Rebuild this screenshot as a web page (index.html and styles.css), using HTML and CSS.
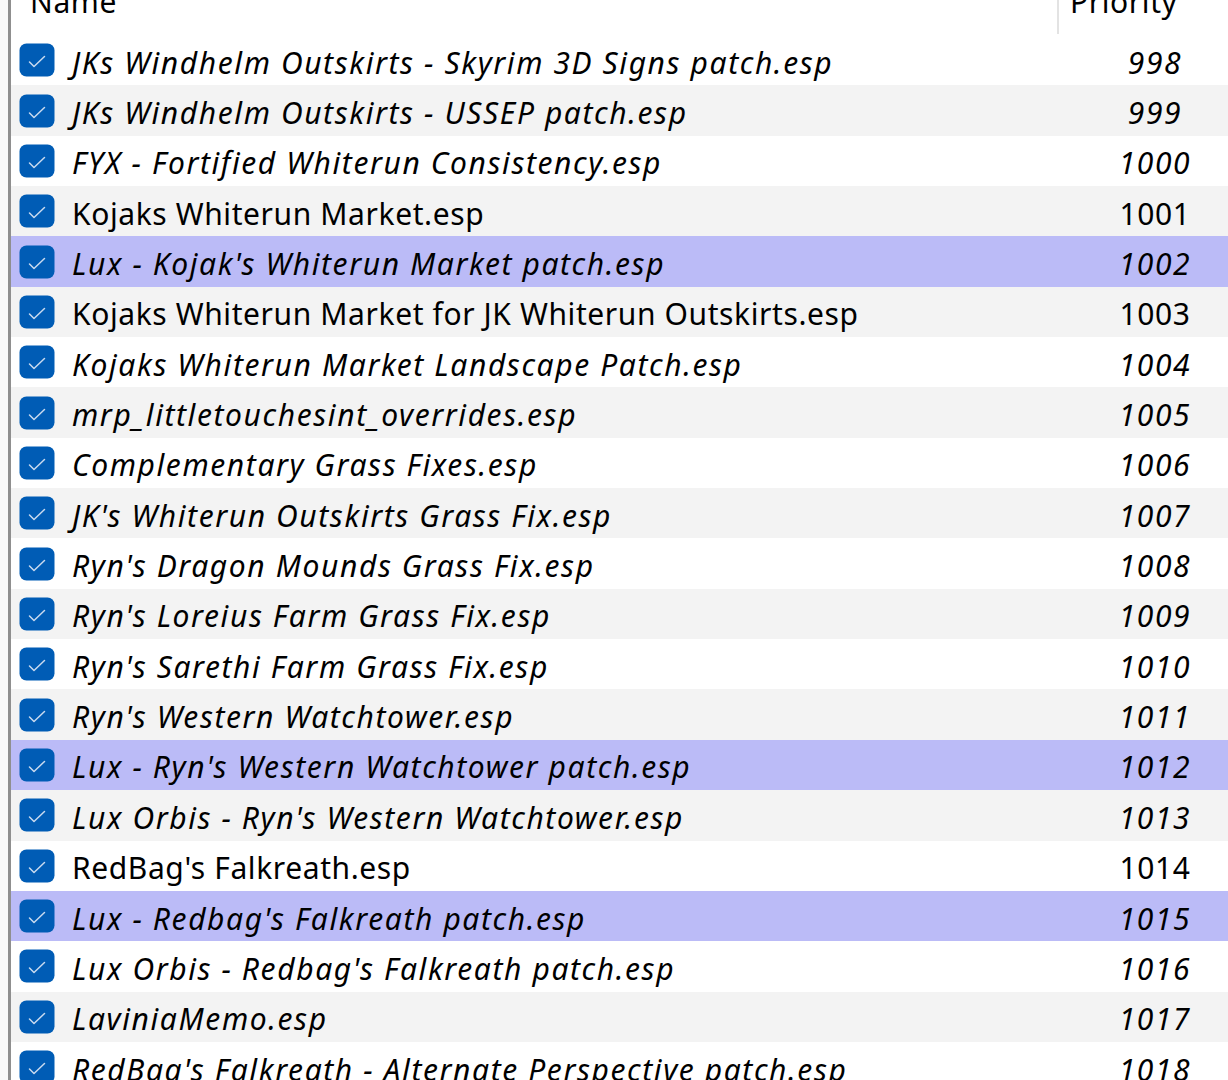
FILE: index.html
```html
<!DOCTYPE html>
<html lang="en">
<head>
    <meta charset="UTF-8">
    <title>Plugins</title>
    <link rel="stylesheet" href="styles.css">
</head>
<body>
    <div class="view">
        <div class="header">
            <div class="col-name">Name</div>
            <div class="col-prio">Priority</div>
        </div>
        <div class="rows" id="rows"></div>
    </div>

<script>
    // список плагинов: имя, приоритет, курсив, подсветка
    const plugins = [
        ["JKs Windhelm Outskirts - Skyrim 3D Signs patch.esp", 998, true, false],
        ["JKs Windhelm Outskirts - USSEP patch.esp", 999, true, false],
        ["FYX - Fortified Whiterun Consistency.esp", 1000, true, false],
        ["Kojaks Whiterun Market.esp", 1001, false, false],
        ["Lux - Kojak's Whiterun Market patch.esp", 1002, true, true],
        ["Kojaks Whiterun Market for JK Whiterun Outskirts.esp", 1003, false, false],
        ["Kojaks Whiterun Market Landscape Patch.esp", 1004, true, false],
        ["mrp_littletouchesint_overrides.esp", 1005, true, false],
        ["Complementary Grass Fixes.esp", 1006, true, false],
        ["JK's Whiterun Outskirts Grass Fix.esp", 1007, true, false],
        ["Ryn's Dragon Mounds Grass Fix.esp", 1008, true, false],
        ["Ryn's Loreius Farm Grass Fix.esp", 1009, true, false],
        ["Ryn's Sarethi Farm Grass Fix.esp", 1010, true, false],
        ["Ryn's Western Watchtower.esp", 1011, true, false],
        ["Lux - Ryn's Western Watchtower patch.esp", 1012, true, true],
        ["Lux Orbis - Ryn's Western Watchtower.esp", 1013, true, false],
        ["RedBag's Falkreath.esp", 1014, false, false],
        ["Lux - Redbag's Falkreath patch.esp", 1015, true, true],
        ["Lux Orbis - Redbag's Falkreath patch.esp", 1016, true, false],
        ["LaviniaMemo.esp", 1017, true, false],
        ["RedBag's Falkreath - Alternate Perspective patch.esp", 1018, true, false]
    ];

    const check = '<svg class="check" viewBox="0 0 36 34"><rect x="0.5" y="0.5" width="35" height="33" rx="7" fill="#005cb5"/>' +
        '<path d="M10.5 19 L15 23.5 L25.5 13.5" fill="none" stroke="#c9daef" stroke-width="1.5" stroke-linecap="round" stroke-linejoin="round"/></svg>';

    const rows = document.getElementById('rows');
    plugins.forEach((p, i) => {
        const row = document.createElement('div');
        row.className = 'row';
        if (i % 2 === 1) row.classList.add('alt');
        if (p[3]) row.classList.add('selected');
        if (p[2]) row.classList.add('inactive');
        row.innerHTML = '<div class="col-name">' + check + '<span class="label"></span></div>' +
            '<div class="col-prio">' + p[1] + '</div>';
        row.querySelector('.label').textContent = p[0];
        rows.appendChild(row);
    });
</script>
</body>
</html>
```

FILE: styles.css
```css
body {
    margin: 0;
    background: #f9f9f9;
    font-family: "Noto Sans", "Open Sans", sans-serif;
    font-size: 30px;
    letter-spacing: 0.6px;
    color: #000;
    overflow: hidden;
}
.view {
    margin-left: 8px;
    border-left: 3px solid #8f8f8f;
    background: #fff;
    width: 1242px;
    height: 1080px;
}
.header {
    display: flex;
    height: 35px;
}
.header .col-name {
    box-sizing: border-box;
    padding-left: 19px;
    line-height: 0;
    padding-top: 2px;
    align-items: flex-start;
}
.header .col-prio {
    border-left: 2px solid #e3e3e3;
    height: 34px;
    box-sizing: border-box;
    padding-left: 11px;
    text-align: left;
    line-height: 0;
    padding-top: 2px;
}
.col-name {
    flex: 0 0 1046px;
    display: flex;
    align-items: center;
}
.col-prio {
    width: 196px;
    text-align: center;
}
.row {
    display: flex;
    align-items: center;
    height: 50.35px;
    white-space: nowrap;
}
.row.alt {
    background: #f3f3f3;
}
.row.selected {
    background: #bbbbf7;
}
.check {
    width: 36px;
    height: 34px;
    margin-left: 8px;
    margin-right: 17px;
    flex-shrink: 0;
}
.label {
    padding-top: 4px;
}
.row .col-prio {
    padding-top: 4px;
}
.inactive .label, .inactive .col-prio {
    font-style: italic;
    letter-spacing: 1.6px;
}
```
